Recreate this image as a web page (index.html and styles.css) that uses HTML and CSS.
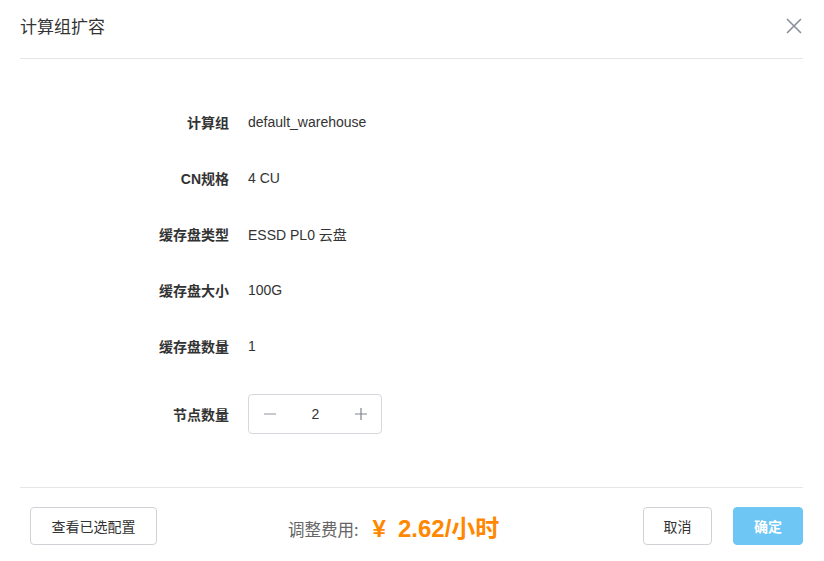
FILE: index.html
```html
<!DOCTYPE html>
<html lang="zh">
<head>
<meta charset="utf-8">
<link rel="stylesheet" href="styles.css">
</head>
<body>
<div class="modal">
  <div class="header">
    <div class="title">计算组扩容</div>
    <svg class="close" width="16" height="16" viewBox="0 0 16 16"><path d="M1 1L15 15M15 1L1 15" stroke="#8a9099" stroke-width="1.6" fill="none"/></svg>
  </div>
  <div class="form">
    <div class="label">计算组</div><div class="value">default_warehouse</div>
    <div class="label">CN规格</div><div class="value">4 CU</div>
    <div class="label">缓存盘类型</div><div class="value">ESSD PL0 云盘</div>
    <div class="label">缓存盘大小</div><div class="value">100G</div>
    <div class="label">缓存盘数量</div><div class="value">1</div>
    <div class="label stepper-label">节点数量</div>
    <div class="value stepper-cell">
      <div class="stepper">
        <svg width="14" height="14" viewBox="0 0 14 14"><path d="M1 7H13" stroke="#a0a5ad" stroke-width="1.2"/></svg>
        <span class="num">2</span>
        <svg width="14" height="14" viewBox="0 0 14 14"><path d="M1 7H13M7 1V13" stroke="#7f858e" stroke-width="1.2"/></svg>
      </div>
    </div>
  </div>
  <div class="footer">
    <button class="btn btn-view">查看已选配置</button>
    <div class="price"><span class="price-label">调整费用:</span><span class="price-value"><span class="yen">¥</span>2.62/小时</span></div>
    <div class="actions">
      <button class="btn">取消</button>
      <button class="btn btn-primary">确定</button>
    </div>
  </div>
</div>
</body>
</html>
```
FILE: styles.css
```css
html, body {
  margin: 0;
  padding: 0;
  background: #fff;
}
body {
  font-family: "Liberation Sans", "Noto Sans CJK SC", sans-serif;
  color: #333;
  width: 824px;
  height: 561px;
  overflow: hidden;
}
.modal {
  padding: 0 21px 0 20px;
}
.header {
  height: 59px;
  border-bottom: 1px solid #e4e6e9;
  display: flex;
  align-items: center;
  justify-content: space-between;
  box-sizing: border-box;
  padding-bottom: 7px;
}
.title {
  font-family: "Noto Sans CJK SC", sans-serif;
  font-size: 17px;
  color: #333;
  line-height: 24px;
}
.close {
  margin-right: 1px;
}
.form {
  display: grid;
  grid-template-columns: 209px 1fr;
  column-gap: 19px;
  grid-auto-rows: 56px;
  padding-top: 35px;
  height: 428px;
  box-sizing: border-box;
  align-content: start;
}
.label {
  font-size: 14px;
  font-weight: bold;
  text-align: right;
  color: #333;
  display: flex;
  align-items: center;
  justify-content: flex-end;
}
.value {
  font-size: 14px;
  color: #333;
  display: flex;
  align-items: center;
}
.stepper-label, .stepper-cell {
  height: 40px;
  margin-top: 20px;
}
.stepper {
  width: 134px;
  height: 40px;
  box-sizing: border-box;
  border: 1px solid #d5d8dd;
  border-radius: 4px;
  display: flex;
  align-items: center;
  justify-content: space-between;
  padding: 0 13px 0 14px;
}
.num {
  font-size: 14px;
  color: #333;
}
.footer {
  border-top: 1px solid #e4e6e9;
  display: flex;
  align-items: center;
  padding: 19px 0 16px 10px;
}
.btn {
  font-family: "Noto Sans CJK SC", sans-serif;
  font-size: 14px;
  height: 38px;
  padding: 0 20px;
  background: #fff;
  border: 1px solid #cfd3d8;
  border-radius: 4px;
  color: #333;
  box-sizing: border-box;
}
.btn-view {
  width: 127px;
}
.price {
  margin-left: 131px;
  display: flex;
  align-items: center;
}
.price-label {
  font-family: "Noto Sans CJK SC", sans-serif;
  font-size: 16.5px;
  color: #666;
  margin-right: 14px;
  margin-top: 5px;
}
.price-value {
  font-family: "Liberation Sans", "Noto Sans CJK SC", sans-serif;
  font-size: 24px;
  font-weight: bold;
  color: #ff8800;
}
.yen {
  margin-right: 12px;
}
.actions {
  margin-left: auto;
  display: flex;
  gap: 21px;
}
.actions .btn {
  width: 69px;
  padding: 0;
}
.btn-primary {
  width: 70px !important;
  background: #6ec6f5;
  border-color: #6ec6f5;
  color: #fff;
  font-weight: bold;
}
```
